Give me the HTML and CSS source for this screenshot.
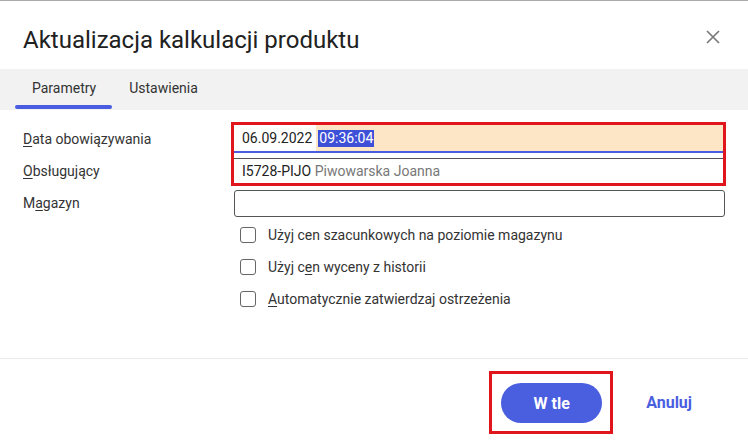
FILE: index.html
```html
<!DOCTYPE html>
<html lang="pl">
<head>
<meta charset="utf-8">
<title>Aktualizacja kalkulacji produktu</title>
<link rel="stylesheet" href="styles.css">
</head>
<body>
<div class="dialog">
  <header class="header">
    <h1 class="title">Aktualizacja kalkulacji produktu</h1>
    <button class="close" aria-label="Zamknij">
      <svg width="14" height="14" viewBox="0 0 14 14"><path d="M1 1 L13 13 M13 1 L1 13" stroke="#7a7a7a" stroke-width="1.7" fill="none"/></svg>
    </button>
  </header>
  <nav class="tabs">
    <div class="tab active">Parametry</div>
    <div class="tab">Ustawienia</div>
  </nav>
  <main class="form">
    <div class="grid">
      <div class="label l1"><span><u>D</u>ata obowiązywania</span></div>
      <div class="label l2"><span><u>O</u>bsługujący</span></div>
      <div class="label l3"><span>M<u>a</u>gazyn</span></div>
      <div class="highlight">
        <div class="date-field">
          <span class="date-part">06.09.2022</span>
          <span class="time-part"><span class="sel">09:36:04</span></span>
        </div>
        <div class="gap"></div>
        <div class="person-field"><span><span class="code">I5728-PIJO</span> <span class="name">Piwowarska Joanna</span></span></div>
      </div>
      <div class="input magazyn"></div>
      <div class="checks">
        <label class="check"><span class="box"></span><span>Użyj cen szacunkowych na poziomie magazynu</span></label>
        <label class="check"><span class="box"></span><span>Użyj c<u>e</u>n wyceny z historii</span></label>
        <label class="check"><span class="box"></span><span><u>A</u>utomatycznie zatwierdzaj ostrzeżenia</span></label>
      </div>
    </div>
  </main>
  <footer class="footer">
    <div class="btn-mark"><button class="primary">W tle</button></div>
    <button class="link">Anuluj</button>
  </footer>
</div>
</body>
</html>
```
FILE: styles.css
```css
* { box-sizing: border-box; }
html, body { margin: 0; padding: 0; background: #fff; }
body {
  font-family: Roboto, "Liberation Sans", sans-serif;
  color: #333;
  width: 748px;
  height: 446px;
  overflow: hidden;
}
.dialog {
  height: 446px;
  display: flex;
  flex-direction: column;
  border-top: 1px solid #a9a9a9;
}
.header {
  height: 68px;
  display: flex;
  align-items: center;
  justify-content: space-between;
  padding: 10px 28px 0 23px;
}
.title {
  margin: 0;
  font-size: 24px;
  font-weight: 400;
  color: #212121;
}
.close {
  border: 0;
  background: none;
  padding: 0;
  width: 14px;
  height: 14px;
  margin-bottom: 6px;
  display: flex;
}
.tabs {
  height: 41px;
  background: #f2f2f2;
  display: flex;
  padding-left: 15px;
}
.tab {
  position: relative;
  font-size: 14px;
  color: #333;
  padding: 0 16px 0 17px;
  display: flex;
  align-items: center;
  padding-bottom: 3px;
}
.tab.active::after {
  content: "";
  position: absolute;
  left: 0;
  right: 0;
  bottom: 1px;
  height: 4px;
  border-radius: 2px;
  background: #4a5ce0;
}
.form {
  flex: 1;
  padding: 13px 0 0 23px;
}
.grid {
  display: grid;
  grid-template-columns: 211px 491px;
  grid-template-rows: 32px 32px 32px auto;
}
.label {
  grid-column: 1;
  font-size: 14px;
  color: #333;
  display: flex;
  align-items: center;
}
.l1 { grid-row: 1; }
.l2 { grid-row: 2; }
.l3 { grid-row: 3; }
u { text-underline-offset: 2px; text-decoration-thickness: 1px; }
.highlight {
  grid-column: 2;
  grid-row: 1 / 3;
  margin: -1px 0 0 -3px;
  width: 495px;
  border: 3px solid #e0161c;
  align-self: start;
  display: flex;
  flex-direction: column;
}
.date-field {
  height: 28px;
  display: flex;
  border-bottom: 2px solid #4a5ce0;
  font-size: 14px;
  color: #222;
}
.date-part {
  padding: 0 4px 0 8px;
  display: flex;
  align-items: center;
  background: #fff;
}
.time-part {
  flex: 1;
  background: #fde6c6;
  display: flex;
  align-items: center;
  padding-left: 2px;
}
.sel {
  background: #3e50d8;
  color: #fff;
  line-height: 17px;
  padding: 0 1px;
}
.gap { height: 5px; }
.person-field {
  height: 25px;
  border-top: 1px solid #555;
  display: flex;
  align-items: center;
  padding-left: 8px;
  font-size: 14px;
}
.code { color: #222; }
.name { color: #777; }
.input {
  grid-column: 2;
  grid-row: 3;
  align-self: center;
  height: 27px;
  width: 491px;
  border: 1px solid #555;
  border-radius: 3px;
  margin-top: 1px;
}
.checks {
  grid-column: 2;
  grid-row: 4;
  padding-left: 6px;
  display: flex;
  flex-direction: column;
}
.check {
  height: 32px;
  display: flex;
  align-items: center;
  gap: 12px;
  font-size: 14px;
  color: #333;
}
.box {
  width: 16px;
  height: 16px;
  border: 1.5px solid #666;
  border-radius: 3px;
  background: #fff;
}
.footer {
  height: 88px;
  border-top: 1px solid #ececec;
  display: flex;
  align-items: center;
  justify-content: flex-end;
  padding: 0 56px 0 0;
  gap: 33px;
}
.btn-mark {
  border: 3px solid #e0161c;
  padding: 9px 8px 8px 9px;
  display: flex;
}
.primary {
  width: 101px;
  height: 40px;
  border: 0;
  border-radius: 20px;
  background: #4a5ee0;
  color: #fff;
  font-family: Roboto, "Liberation Sans", sans-serif;
  font-size: 16px;
  font-weight: 700;
}
.link {
  border: 0;
  background: none;
  padding: 0;
  color: #4a5ee0;
  font-family: Roboto, "Liberation Sans", sans-serif;
  font-size: 16px;
  font-weight: 700;
}
```
